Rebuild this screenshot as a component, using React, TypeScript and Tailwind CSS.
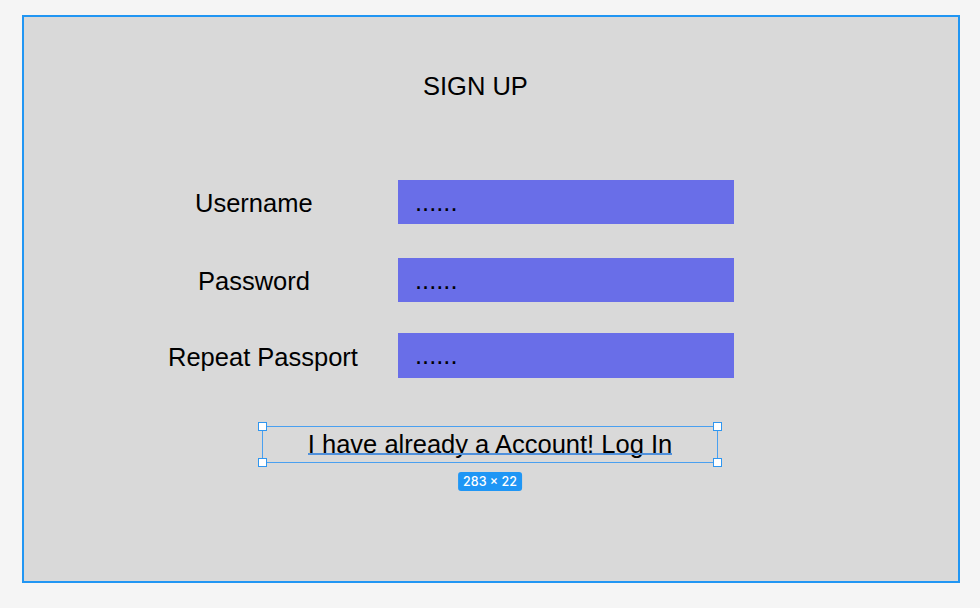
import React from "react";

const font = { fontFamily: '"Liberation Sans", Arial, sans-serif' };

function Row({ label, labelMl, mt, h }: { label: string; labelMl: string; mt: string; h: string }) {
  return (
    <div className={`flex items-center ${mt}`}>
      <div className="w-[374px] shrink-0 pt-[3px]">
        <span className={`inline-block ${labelMl} text-[25.5px] text-black`}>{label}</span>
      </div>
      <div className={`w-[336px] ${h} bg-[#696ee8] flex items-center pl-[17px] text-[25.5px] text-black`}>
        ......
      </div>
    </div>
  );
}

export default function App() {
  return (
    <div className="w-[980px] h-[608px] bg-[#f5f5f5] pt-[15px] pl-[22px]" style={font}>
      <div className="w-[938px] h-[568px] border-2 border-[#2196f3] bg-[#d9d9d9] flex flex-col">
        <div className="mt-[54px] pl-[399px] text-[25.5px] leading-[30px] text-black">SIGN UP</div>
        <div className="flex flex-col">
          <Row label="Username" labelMl="ml-[171px]" mt="mt-[79px]" h="h-[44px]" />
          <Row label="Password" labelMl="ml-[174px]" mt="mt-[34px]" h="h-[44px]" />
          <Row label="Repeat Passport" labelMl="ml-[144px]" mt="mt-[31px]" h="h-[45px]" />
        </div>
        <div className="mt-[48px] ml-[238px] relative w-[456px] h-[37px] border border-[#4aa0f0] flex justify-center items-start pt-[6px]">
          <span className="relative inline-block text-[25.5px] leading-[22px] text-black whitespace-nowrap">
            I have already a Account! Log In
            <span className="absolute left-0 right-0 top-[20px] h-[2px] bg-[#4f90dc]" />
          </span>
          <span className="absolute -left-[5px] -top-[5px] w-[9px] h-[9px] bg-white border border-[#2f96f0]" />
          <span className="absolute -right-[5px] -top-[5px] w-[9px] h-[9px] bg-white border border-[#2f96f0]" />
          <span className="absolute -left-[5px] -bottom-[5px] w-[9px] h-[9px] bg-white border border-[#2f96f0]" />
          <span className="absolute -right-[5px] -bottom-[5px] w-[9px] h-[9px] bg-white border border-[#2f96f0]" />
          <div className="absolute left-1/2 -translate-x-1/2 top-[45px] h-[19px] px-[5px] rounded-[3px] bg-[#1f96f5] text-white text-[12.5px] font-medium leading-[19px] whitespace-nowrap" style={{ fontFamily: 'Inter, "Liberation Sans", sans-serif' }}>
            283 × 22
          </div>
        </div>
      </div>
    </div>
  );
}
